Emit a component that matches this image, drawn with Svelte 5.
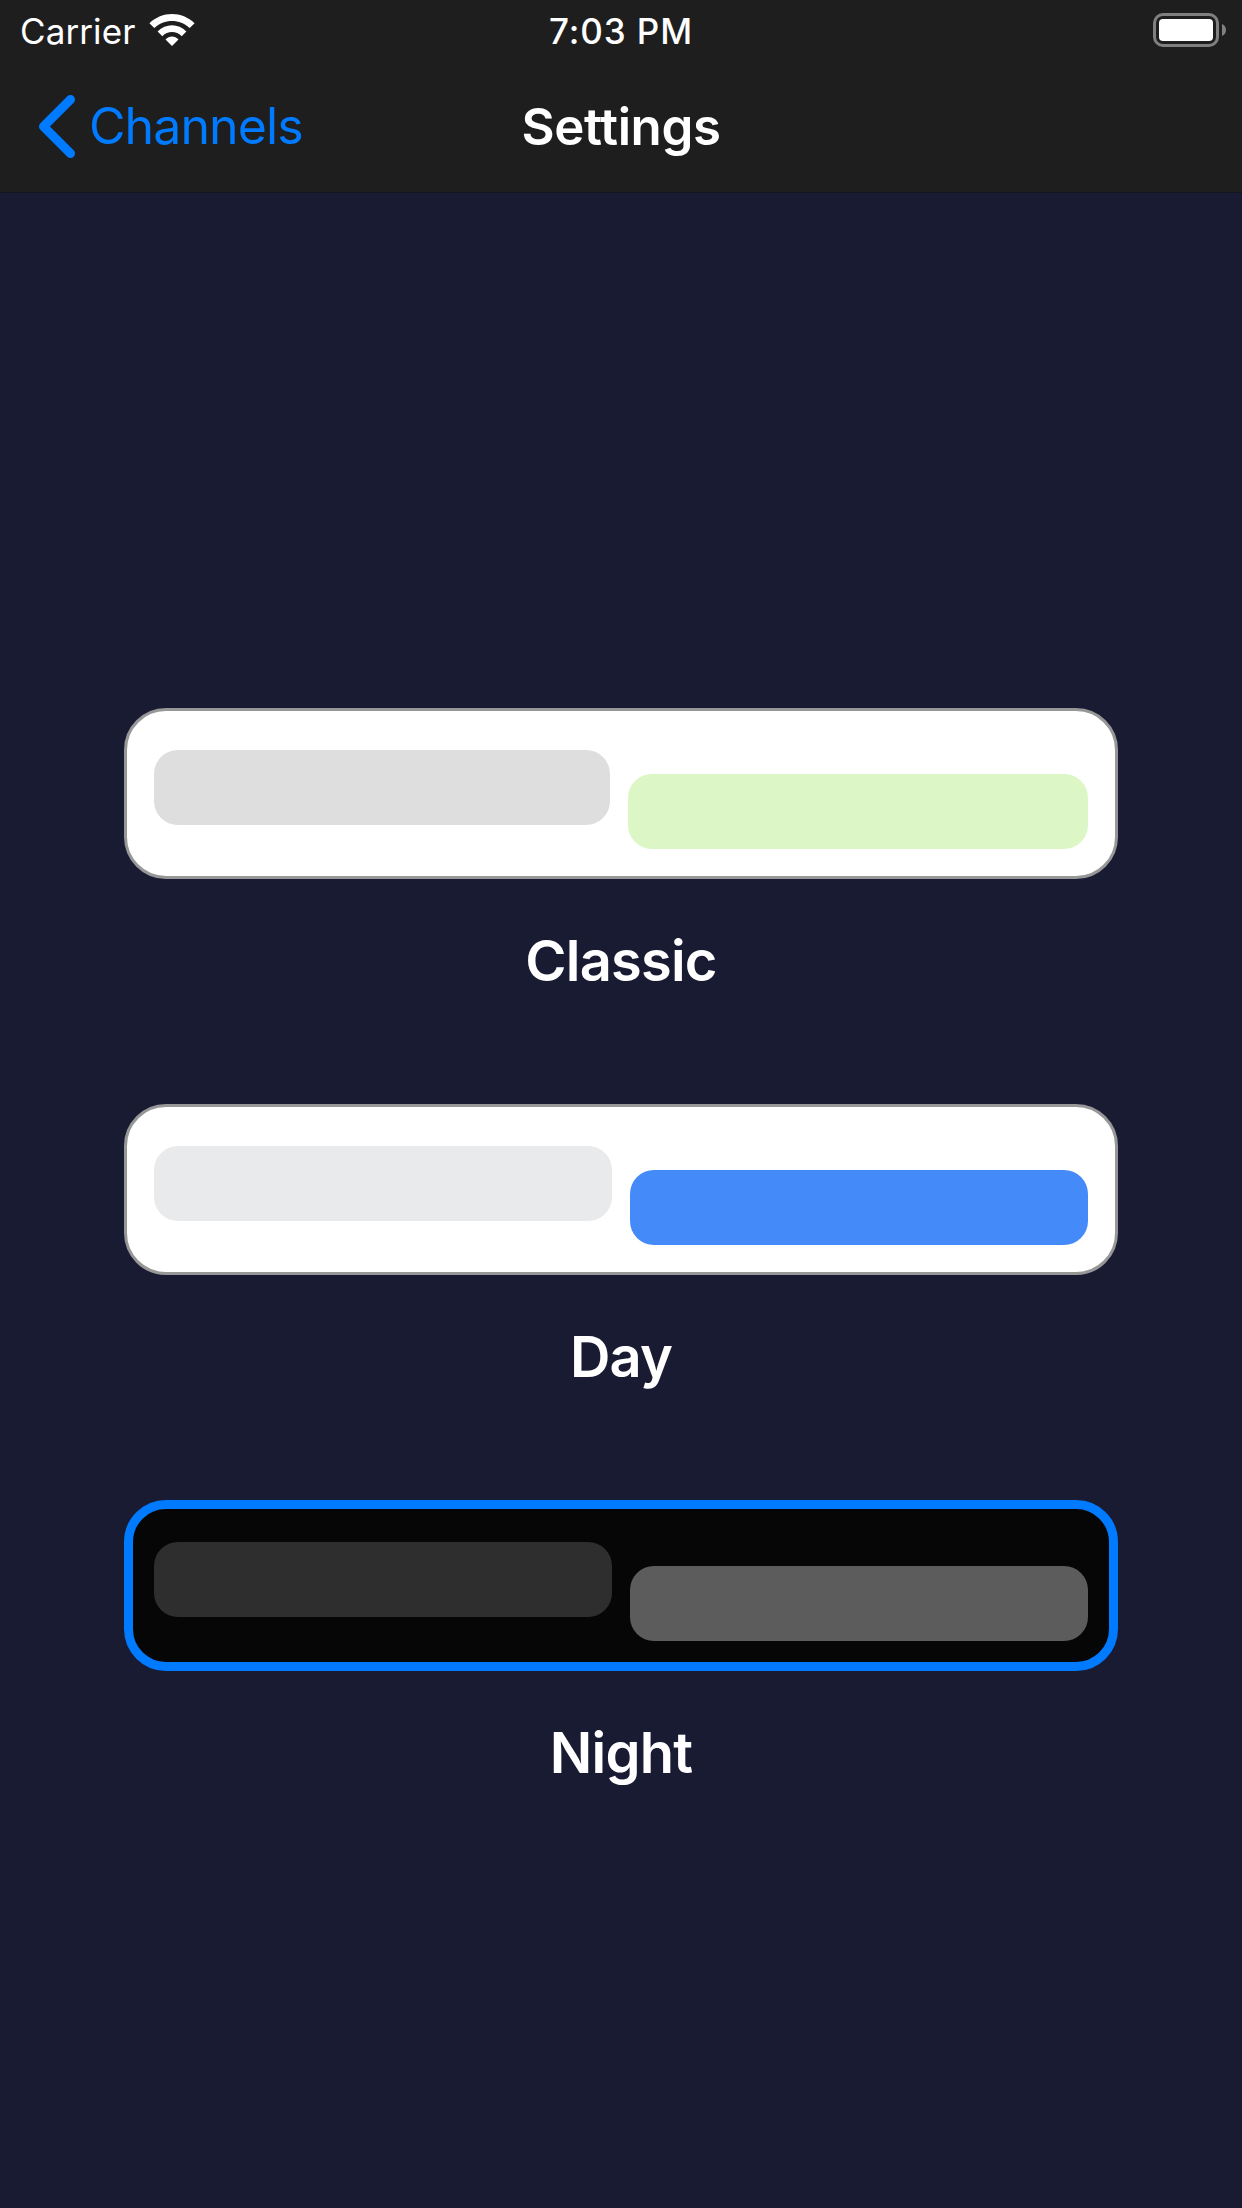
<script>
  const themes = [
    { id: 'classic', name: 'Classic' },
    { id: 'day', name: 'Day' },
    { id: 'night', name: 'Night' },
  ];
  let selected = $state('night');
</script>

<div class="screen">
  <header>
    <div class="status">
      <div class="network">
        <span class="carrier">Carrier</span>
        <svg class="wifi" width="46" height="34" viewBox="0 0 46 34">
          <path d="M0.4 10.2C13 -2.2 33 -2.2 45.6 10.2L40.7 15.1C30.9 5.5 15.1 5.5 5.3 15.1Z" />
          <path d="M8.6 18.4C16.7 10.1 29.3 10.1 37.4 18.4L32.7 23.2C27.2 17.7 18.8 17.7 13.3 23.2Z" />
          <path d="M16.5 26.4C20.2 22.5 25.8 22.5 29.5 26.4L23 33Z" />
        </svg>
      </div>
      <span class="time">7:03 PM</span>
      <svg class="battery" width="74" height="34" viewBox="0 0 74 34">
        <rect x="1.5" y="1.5" width="63" height="31" rx="8.5" fill="none" stroke="#808080" stroke-width="3" />
        <rect x="6" y="6" width="54" height="22" rx="4" fill="#fff" />
        <path d="M69 11C71.5 12 73 14.3 73 17C73 19.7 71.5 22 69 23Z" fill="#808080" />
      </svg>
    </div>
    <nav>
      <button class="back">
        <svg width="38" height="64" viewBox="0 0 38 64">
          <path d="M32.5 5.5L5.5 32.5L32.5 59.5" fill="none" stroke="#007aff" stroke-width="9" stroke-linecap="round" stroke-linejoin="round" />
        </svg>
        <span>Channels</span>
      </button>
      <h1>Settings</h1>
      <div></div>
    </nav>
  </header>

  <main>
    {#each themes as theme (theme.id)}
      <button class="theme {theme.id}" class:selected={selected === theme.id} onclick={() => (selected = theme.id)}>
        <span class="preview">
          <span class="bubble incoming"></span>
          <span class="bubble outgoing"></span>
        </span>
        <span class="label">{theme.name}</span>
      </button>
    {/each}
  </main>
</div>

<style>
  :global(body) {
    background: #191b33;
  }
  .screen {
    width: 1242px;
    height: 2208px;
    overflow: hidden;
    background: #191b33;
    color: #fff;
    font-family: Inter, sans-serif;
  }
  button {
    border: 0;
    padding: 0;
    background: none;
    color: inherit;
    font: inherit;
  }
  header {
    box-sizing: border-box;
    height: 193px;
    background: #1e1e1e;
    border-bottom: 1px solid #151520;
  }
  .status {
    display: grid;
    grid-template-columns: 1fr auto 1fr;
    height: 60px;
    padding: 0 15px 0 20px;
    font-size: 35px;
    line-height: 62px;
  }
  .network {
    display: flex;
  }
  .carrier {
    width: 129px;
    letter-spacing: 0.1px;
    white-space: nowrap;
  }
  .wifi {
    margin-top: 13px;
    fill: #fff;
  }
  .time {
    margin-right: 5px;
    font-weight: 550;
    letter-spacing: 0.9px;
  }
  .battery {
    justify-self: end;
    margin-top: 13px;
  }
  nav {
    display: grid;
    grid-template-columns: 1fr auto 1fr;
    align-items: center;
    height: 132px;
    padding: 0 38px;
    font-size: 50px;
    line-height: 60px;
  }
  .back {
    display: flex;
    align-items: center;
    gap: 13px;
    color: #007aff;
    letter-spacing: -0.9px;
  }
  h1 {
    margin: 0;
    padding-top: 2px;
    font-size: 51px;
    font-weight: 600;
    letter-spacing: -0.4px;
  }
  main {
    display: flex;
    flex-direction: column;
    gap: 110px;
    padding: 515px 124px 0;
  }
  .theme {
    display: flex;
    flex-direction: column;
    gap: 49px;
  }
  .preview {
    box-sizing: border-box;
    display: flex;
    justify-content: space-between;
    width: 994px;
    height: 171px;
    padding: 39px 27px;
    border: 3px solid #979797;
    border-radius: 42px;
    background: #fff;
  }
  .selected .preview {
    padding: 33px 21px;
    border: 9px solid #007aff;
  }
  .bubble {
    width: 458px;
    height: 75px;
    border-radius: 24px;
  }
  .outgoing {
    margin-top: 24px;
  }
  .classic .incoming {
    width: 456px;
    background: #dedede;
  }
  .classic .outgoing {
    width: 460px;
    background: #dcf6c5;
  }
  .day .incoming {
    background: #e9eaec;
  }
  .day .outgoing {
    background: #448af9;
  }
  .night .preview {
    background: #060606;
  }
  .night .incoming {
    background: #2e2e2e;
  }
  .night .outgoing {
    background: #5c5c5c;
  }
  .label {
    width: 100%;
    font-size: 56px;
    font-weight: 600;
    letter-spacing: -0.8px;
    line-height: 66px;
    text-align: center;
  }
</style>
